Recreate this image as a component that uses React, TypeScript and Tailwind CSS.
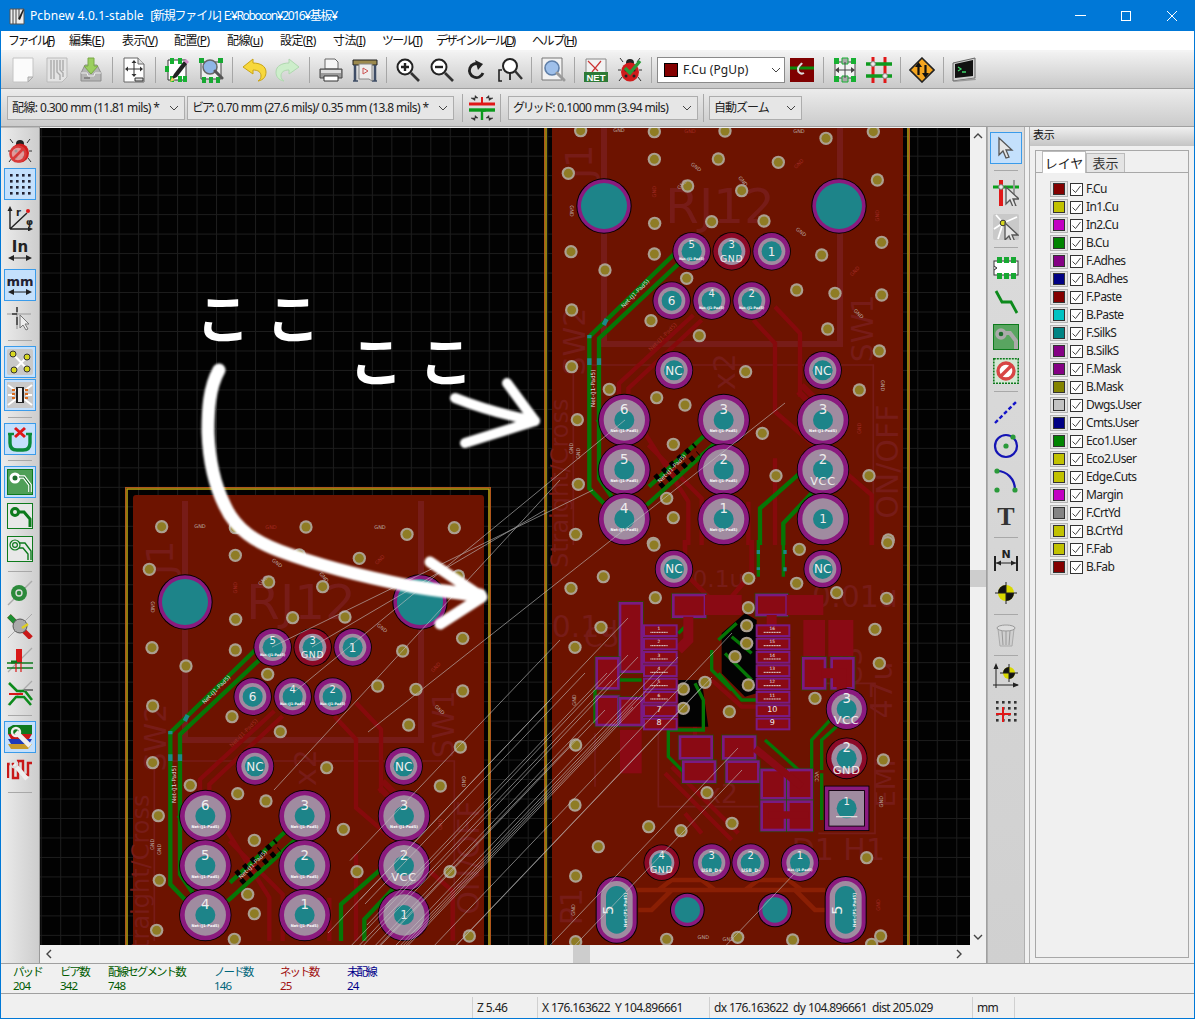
import React from 'react';

const I = ({ children, s = 26 }: { children: React.ReactNode; s?: number }) => (
  <svg width={s} height={s} viewBox="0 0 26 26" fill="none">{children}</svg>
);

/* ---------- top toolbar icons ---------- */
const IcNew = () => <I><path d="M3 1h20v19l-5 5H3z" fill="#fbfbfb" stroke="#c4c4c4" /><path d="M23 20h-5v5z" fill="#d8d8d8" stroke="#aaa" /></I>;
const IcBoard = () => <I><path d="M3 1h20v19l-5 5H3z" fill="#e4e4e4" stroke="#bbb" /><path d="M7 3v19M10 3v19M13 3v12l3 3v5M16 3v10l3 3v4M19 3v11" stroke="#aaa" strokeWidth="1.4" /></I>;
const IcSave = () => <I><path d="M3 16l4-8h12l4 8v8H3z" fill="#b5b5b5" stroke="#8e8e8e" /><path d="M3 16h6l1 3h6l1-3h6" stroke="#eee" /><path d="M6 21h6" stroke="#777" strokeWidth="1.5" /><path d="M10 1h6v8h4l-7 8-7-8h4z" fill="#9bcf5f" stroke="#7aa848" /></I>;
const IcPage = () => <I><path d="M3 1h14l6 6v18H3z" fill="#fff" stroke="#666" /><path d="M17 1v6h6" fill="#ddd" stroke="#666" /><path d="M13 4v15M5 12h16" stroke="#333" /><path d="M13 3l-2.5 3h5zM13 20l-2.5-3h5zM4 12l3-2.5v5zM22 12l-3-2.5v5z" fill="#333" /><path d="M14 21h8v3h-8z" fill="#ddd" stroke="#333" /></I>;
const IcNetEdit = () => <I><path d="M4 3h18v20H4z" fill="#fff" stroke="#333" /><path d="M6 1h4v6H6zM14 1h4v6h-4zM6 19h4v6H6zM14 19h4v6h-4zM1 9h4v6H1z" fill="#17b032" /><path d="M19 19h4v6h-4z" fill="#17b032" /><path d="M7 23l3-6L20 4l3 3-10 13z" fill="#222" /><path d="M20 4l2-2 3 3-2 2z" fill="#d58ac8" /><path d="M6 25l2-5 3 3z" fill="#f0d060" /></I>;
const IcModView = () => <I><path d="M3 5h20v17H3z" fill="#eee" stroke="#444" /><path d="M1 1h5v5H1zM20 1h5v5h-5zM4 20h4v6H4zM11 20h4v6h-4zM18 20h4v6h-4z" fill="#17a832" /><circle cx="12" cy="10" r="7" fill="#8fb6e6" stroke="#666" strokeWidth="1.5" /><path d="M17 14l7 7" stroke="#555" strokeWidth="3" strokeLinecap="round" /></I>;
const IcUndo = () => <I><path d="M12 2L2 10l10 7v-4c5 0 8 2 8 6 0 2-1 4-3 5 6-1 8-5 8-9 0-6-6-9-13-9z" fill="#f7d83c" stroke="#c9a315" /></I>;
const IcRedo = () => <I><path d="M14 2l10 8-10 7v-4c-5 0-8 2-8 6 0 2 1 4 3 5-6-1-8-5-8-9 0-6 6-9 13-9z" fill="#cdeecb" stroke="#b0d8b0" /></I>;
const IcPrint = () => <I><path d="M7 2h10l3 3v7H7z" fill="#f6f6f6" stroke="#666" /><path d="M2 12h22v9H2z" fill="#9a9a9a" stroke="#444" /><path d="M3 13h20v3H3z" fill="#ddd" /><path d="M6 19h14v5H6z" fill="#fff" stroke="#333" /></I>;
const IcPlot = () => <I><path d="M1 3h24v5H1z" fill="#9c8a4e" stroke="#222" /><path d="M3 8v16M23 8v16" stroke="#3f4d66" strokeWidth="2.5" /><path d="M1 24h5M20 24h5" stroke="#3f4d66" strokeWidth="1.5" /><path d="M7 7h13v17l-3-2H7z" fill="#eee" stroke="#888" /><path d="M11 11l5 3-5 3z" fill="none" stroke="#c55" /></I>;
const IcZoomIn = () => <I><circle cx="10" cy="10" r="7.5" fill="#fff" stroke="#222" strokeWidth="2" /><path d="M6 10h8M10 6v8" stroke="#222" strokeWidth="2.4" /><path d="M16 16l8 8" stroke="#333" strokeWidth="2.6" /></I>;
const IcZoomOut = () => <I><circle cx="10" cy="10" r="7.5" fill="#fff" stroke="#222" strokeWidth="2" /><path d="M6 10h8" stroke="#222" strokeWidth="2.4" /><path d="M16 16l8 8" stroke="#333" strokeWidth="2.6" /></I>;
const IcRedraw = () => <I><path d="M20 16a7 7 0 1 1-4-9" stroke="#222" strokeWidth="2.8" /><path d="M12 3l8 4-5 6z" fill="#222" /></I>;
const IcZoomFit = () => <I><circle cx="13" cy="9" r="7" fill="#fff" stroke="#222" strokeWidth="2" /><path d="M18 14l7 8" stroke="#333" strokeWidth="2.4" /><path d="M5 13H2v11h3" stroke="#222" strokeWidth="1.6" /><path d="M13 16v7" stroke="#222" strokeWidth="1.8" /></I>;
const IcFind = () => <I><path d="M2 1h20v22H2z" fill="#f2f2f2" stroke="#777" /><circle cx="12" cy="11" r="7" fill="#9fc0ea" stroke="#5f7fa8" strokeWidth="1.6" /><path d="M17 16l7 7" stroke="#9a9a9a" strokeWidth="3" strokeLinecap="round" /></I>;
const IcNet = () => <I><path d="M3 2h20v16H3z" fill="#f2f2f2" stroke="#888" /><path d="M5 4l10 10M18 4L9 15" stroke="#c33" strokeWidth="1.2" /><path d="M1 15h24v10H1z" fill="#2d7a36" /><text x="13" y="24" fontSize="9.500" fontWeight="700" fontFamily="'Liberation Sans',sans-serif" fill="#fff" textAnchor="middle">NET</text></I>;
const Bug = () => <><path d="M6 5L3 1M20 5l3-4M4 13H1M25 13h-3M5 20l-3 4M21 20l3 4" stroke="#333" /><circle cx="13" cy="6" r="4" fill="#222" /><ellipse cx="13" cy="15" rx="9" ry="9.5" fill="#d01c1c" /><circle cx="9" cy="13" r="1.5" fill="#222" /><circle cx="17" cy="13" r="1.5" fill="#222" /><circle cx="9" cy="19" r="1.5" fill="#222" /><circle cx="17" cy="19" r="1.5" fill="#222" /></>;
const IcDrc = () => <I><Bug /><path d="M8 11l5 5 10-12" stroke="#2b9a3a" strokeWidth="3.4" /></I>;
const IcLayer = () => <I><path d="M1 1h24v24H1z" fill="#7f0000" /><path d="M1 11h24" stroke="#0c8a0c" strokeWidth="3" /><path d="M15 16a4 4 0 0 1-6-4c0-3 3-4 4-6" stroke="#ddd" strokeWidth="2" /></I>;
const IcAuto = () => <I><path d="M3 5h20v16H3z" fill="#f4f4f4" stroke="#444" /><path d="M2 1h5v6H2zM19 1h5v6h-5zM2 19h5v6H2zM19 19h5v6h-5z" fill="#17b032" /><path d="M10 1h6v6h-6zM10 19h6v6h-6z" fill="#aaa" stroke="#17b032" /><path d="M4 13h18M13 5v16" stroke="#444" /><path d="M3 13l4-3v6zM23 13l-4-3v6z" fill="#444" /></I>;
const IcTrack = () => <I><path d="M7 0v26M19 0v26" stroke="#e01818" strokeWidth="3" /><path d="M0 7h26M0 19h26" stroke="#0f9a1f" strokeWidth="3.4" /><circle cx="7" cy="7" r="2.4" fill="#eee" stroke="#888" /><circle cx="19" cy="19" r="2.4" fill="#eee" stroke="#888" /></I>;
const IcSwap = () => <I><path d="M13 1l12 12-12 12L1 13z" fill="#f4a51f" stroke="#222" strokeWidth="1.6" /><path d="M9.5 18V8M16.5 8v10" stroke="#111" strokeWidth="2.2" /><path d="M9.5 5l-3.5 5h7zM16.5 21l-3.5-5h7z" fill="#111" /></I>;
const IcTerm = () => <I><path d="M1 6l22-5v20l-22 3z" fill="#d0d0d0" stroke="#666" /><path d="M3 7l18-4v16L3 21z" fill="#111" /><path d="M6 10l3 2-3 2M10 15h4" stroke="#3dd66b" strokeWidth="1.3" /><path d="M1 24l22-3 1 2-22 2z" fill="#999" /></I>;

/* ---------- left toolbar ---------- */
const IcDrcOff = () => <I><Bug /><circle cx="11" cy="16" r="7.5" stroke="#d83a3a" strokeWidth="2.6" fill="#eee" fillOpacity=".6" /><path d="M6 21l10-10" stroke="#d83a3a" strokeWidth="2.6" /></I>;
const IcGrid = () => <I>{[3, 9, 15, 21].flatMap(y => [3, 9, 15, 21].map(x => <rect key={x + '-' + y} x={x} y={y} width="2.6" height="2.6" fill="#223" />))}</I>;
const IcPolar = () => <I><path d="M3 24V4M3 24h21M3 24L20 8" stroke="#222" strokeWidth="1.4" /><path d="M3 1l-2.5 5h5zM26 24l-5-2.5v5z" fill="#222" /><circle cx="21" cy="6" r="2" fill="#e01818" /><text x="9" y="11" fontSize="10" fontWeight="700" fontFamily="'DejaVu Sans',sans-serif" fill="#222">r</text><text x="19" y="20" fontSize="9" fontFamily="'DejaVu Sans',sans-serif" fontWeight="700" fill="#222">φ</text></I>;
const IcIn = () => <I><text x="13" y="14" fontSize="15" fontWeight="700" fontFamily="'DejaVu Sans',sans-serif" fill="#222" textAnchor="middle">In</text><path d="M3 20h20" stroke="#222" /><path d="M1 20l6-3v6zM25 20l-6-3v6z" fill="#222" /></I>;
const IcMm = () => <I><text x="13" y="14" fontSize="13" fontWeight="700" fontFamily="'DejaVu Sans',sans-serif" fill="#223" textAnchor="middle">mm</text><path d="M3 20h20" stroke="#222" /><path d="M1 20l6-3v6zM25 20l-6-3v6z" fill="#222" /></I>;
const IcCursor = () => <I><path d="M10 2v22M0 9h24" stroke="#999" strokeWidth="1.2" /><path d="M10 2v5M10 12v8M5 9h5" stroke="#333" strokeWidth="1.4" /><path d="M13 10v13l3-3 3 5 2-1-3-5h4z" fill="#eee" stroke="#777" /></I>;
const IcRats = () => <I><rect width="26" height="26" rx="2" fill="#c9c9c9" /><path d="M6 5l14 15M20 8L8 20" stroke="#fff" strokeWidth="2" /><circle cx="6" cy="5" r="3" fill="#d8d820" stroke="#333" /><circle cx="20" cy="8" r="3" fill="#d8d820" stroke="#333" /><circle cx="7" cy="21" r="3" fill="#d8d820" stroke="#333" /><circle cx="20" cy="20" r="3" fill="#d8d820" stroke="#333" /></I>;
const IcModRats = () => <I><rect width="26" height="26" fill="#c9c9c9" /><path d="M1 3l8 6M25 3l-8 6M1 23l8-6M25 23l-8-6M1 13h6M25 13h-6" stroke="#fff" strokeWidth="2" /><rect x="9" y="5" width="8" height="16" fill="#222" /><path d="M11 6h4v14h-4z" fill="#eee" /><path d="M5 8h3M5 12h3M5 16h3M18 8h3M18 12h3M18 16h3" stroke="#d86a1c" strokeWidth="2" /></I>;
const IcXU = () => <I><path d="M3 9v8c0 5 3 7 7 7h6c4 0 7-2 7-7V9" stroke="#0a8a3a" strokeWidth="3.4" /><path d="M1 8h6M19 8h6" stroke="#0a8a3a" strokeWidth="2.4" /><path d="M8 2l10 9M18 2L8 11" stroke="#e01818" strokeWidth="3" /></I>;
const IcFillZone = () => <I><rect x=".5" y=".5" width="25" height="25" fill="#4f9f57" stroke="#0d7a1c" /><circle cx="8" cy="9" r="4" stroke="#fff" strokeWidth="3" fill="#1d6d2c" /><path d="M12 8h5l6 8v7" stroke="#fff" strokeWidth="3.6" /><path d="M12 8h5l6 8v7" stroke="#0b6a1c" strokeWidth="1.2" /></I>;
const IcZoneOut = () => <I><rect x=".5" y=".5" width="25" height="25" stroke="#0d7a1c" fill="#e8e8e8" /><circle cx="8" cy="9" r="3.5" stroke="#0d7a1c" strokeWidth="3" /><path d="M12 9h5l6 7v8" stroke="#0d7a1c" strokeWidth="3" /></I>;
const IcZoneSk = () => <I><rect x=".5" y=".5" width="25" height="25" stroke="#0d7a1c" fill="#e8e8e8" /><circle cx="8" cy="9" r="5" stroke="#0d7a1c" strokeWidth="1.2" /><circle cx="8" cy="9" r="2.4" stroke="#0d7a1c" strokeWidth="1.2" /><path d="M12 7h6l6 8v9M12 12h4l5 6v6" stroke="#0d7a1c" strokeWidth="1.4" /></I>;
const IcVia = () => <I><path d="M1 25L25 1" stroke="#aaa" strokeWidth="1.5" /><circle cx="12" cy="13" r="8" fill="#2c8a3b" /><circle cx="12" cy="13" r="3" stroke="#ddd" strokeWidth="1.4" /></I>;
const IcTrk = () => <I><path d="M2 3l22 22" stroke="#c81818" strokeWidth="5" /><path d="M2 3l9 9" stroke="#1d8f33" strokeWidth="5" /><circle cx="13" cy="13" r="7" fill="#aaa" stroke="#555" /><path d="M15 15l6-4" stroke="#e0d020" strokeWidth="2.4" /><path d="M1 25L25 1" stroke="#aaa" /></I>;
const IcPadIc = () => <I><path d="M1 25L25 1" stroke="#aaa" strokeWidth="1.2" /><path d="M9 2h6v14H9z" fill="#d81818" /><path d="M0 16h26M0 21h26" stroke="#0d7a1c" strokeWidth="1.6" /><path d="M4 15h6" stroke="#0d7a1c" strokeWidth="3" /><path d="M9 16v9M14 16v9" stroke="#d81818" strokeWidth="1.2" /></I>;
const IcTrkX = () => <I><path d="M1 25L25 1" stroke="#aaa" strokeWidth="1.2" /><path d="M2 3l8 8h8l7 9" stroke="#0d8a1c" strokeWidth="2.6" /><path d="M2 25l7-8h8l7 8" stroke="#0d8a1c" strokeWidth="2.6" /><path d="M2 14h14" stroke="#d81818" strokeWidth="2" /><path d="M17 10h9" stroke="#777" strokeWidth="2" /></I>;
const IcLayers = () => <I><path d="M1 4l5-3h19v9H1z" fill="#0e7a1e" /><path d="M1 10h24l-3 5H4z" fill="#c81818" /><path d="M1 15h24l-3 5H4z" fill="#1c3bb8" /><path d="M1 20h24l-4 5H4z" fill="#c69a2a" /><path d="M9 8l14 14" stroke="#eee" strokeWidth="4.6" /><circle cx="9" cy="8" r="4" stroke="#eee" strokeWidth="2.4" /></I>;
const IcMeander = () => <I><path d="M1 21V7h5v14h5V4h5v14h5V6h4" stroke="#c81818" strokeWidth="2.4" /><path d="M7 7l13 15" stroke="#eee" strokeWidth="4.6" /><circle cx="7" cy="7" r="3.4" stroke="#ddd" strokeWidth="2" /></I>;

/* ---------- right toolbar ---------- */
const Arrow = ({ x = 0, y = 0 }: { x?: number; y?: number }) => <path transform={`translate(${x} ${y})`} d="M0 0v17l4-4 3 7 3-1-3-7h6z" fill="#e6e6e6" stroke="#555" strokeWidth="1.3" />;
const IcSel = () => <I><Arrow x={6} y={3} /></I>;
const IcHigh = () => <I><path d="M0 7h26" stroke="#0ca01c" strokeWidth="3" /><path d="M8 0v26" stroke="#e01818" strokeWidth="4" /><path d="M21 0v24" stroke="#999" strokeWidth="2" /><circle cx="8" cy="7" r="2.4" fill="#eee" stroke="#777" /><Arrow x={13} y={7} /></I>;
const IcLocal = () => <I><rect width="26" height="26" rx="2" fill="#c9c9c9" /><path d="M10 9L3 1M10 9L24 3M10 9L1 15M10 9l-5 16" stroke="#fff" strokeWidth="1.8" /><circle cx="10" cy="9" r="2.8" fill="#d8d820" stroke="#333" /><Arrow x={12} y={9} /></I>;
const IcMod = () => <I><rect x="1" y="6" width="24" height="14" fill="#fff" stroke="#333" /><path d="M4 2h5v6H4zM11 2h5v6h-5zM18 2h5v6h-5zM4 18h5v6H4zM11 18h5v6h-5zM18 18h5v6h-5z" fill="#17a832" /><path d="M1 11l3 2-3 2" fill="#ccc" stroke="#333" /></I>;
const IcRoute = () => <I><path d="M3 2l6 11h9l6 11" stroke="#0d8a1c" strokeWidth="2.8" /></I>;
const IcKeep = () => <I><rect x=".5" y=".5" width="25" height="25" fill="#59a560" stroke="#0d7a1c" /><circle cx="8" cy="10" r="4" stroke="#aaa" strokeWidth="3.4" fill="#1d6d2c" /><path d="M12 9h5l6 8v8" stroke="#aaa" strokeWidth="4" /></I>;
const IcNo = () => <I><rect x=".8" y=".8" width="24.4" height="24.4" fill="#d4e8d4" stroke="#0d7a1c" strokeWidth="1.6" strokeDasharray="2 1" /><circle cx="13" cy="13" r="8" fill="#fff" stroke="#d84545" strokeWidth="3.4" /><path d="M8 18l10-10" stroke="#d84545" strokeWidth="3.4" /></I>;
const IcLine = () => <I><path d="M2 24L24 2" stroke="#1414c8" strokeWidth="2.4" strokeDasharray="4 2.4" /></I>;
const IcCircle = () => <I><circle cx="13" cy="13" r="11" stroke="#1414b4" strokeWidth="2.2" /><circle cx="13" cy="13" r="2.6" fill="#2a9a3a" /><circle cx="20" cy="4" r="2.6" fill="#2a9a3a" /></I>;
const IcArc = () => <I><path d="M4 3c10 0 18 8 18 19" stroke="#1414b4" strokeWidth="2.2" /><circle cx="4" cy="3" r="2.6" fill="#2a9a3a" /><circle cx="22" cy="22" r="2.6" fill="#2a9a3a" /><circle cx="4" cy="22" r="2.6" fill="#2a9a3a" /></I>;
const IcT = () => <I><text x="13" y="23" fontSize="26" fontWeight="700" fontFamily="'Liberation Serif',serif" fill="#333" textAnchor="middle">T</text></I>;
const IcDim = () => <I><path d="M2 10v15M24 10v15" stroke="#222" strokeWidth="2" /><path d="M3 17h20" stroke="#222" /><path d="M3 17l5-2.5v5zM23 17l-5-2.5v5z" fill="#222" /><text x="13" y="12" fontSize="11" fontWeight="700" fontFamily="'DejaVu Sans',sans-serif" fill="#222" textAnchor="middle">N</text></I>;
const Target = ({ x = 13, y = 13, r = 8 }: { x?: number; y?: number; r?: number }) => <><circle cx={x} cy={y} r={r} fill="#d8d800" /><path d={`M${x} ${y}V${y - r}A${r} ${r} 0 0 0 ${x - r} ${y}zM${x} ${y}V${y + r}A${r} ${r} 0 0 0 ${x + r} ${y}z`} fill="#111" /><path d={`M${x - r - 3} ${y}h${2 * r + 6}M${x} ${y - r - 3}v${2 * r + 6}`} stroke="#222" /></>;
const IcTarget = () => <I><Target /></I>;
const IcTrash = () => <I><path d="M5 7h16l-2 17H7z" fill="#cfcfcf" stroke="#aaa" /><path d="M9 9l1 14M13 9v14M17 9l-1 14" stroke="#999" /><ellipse cx="13" cy="6" rx="9" ry="3" fill="#ddd" stroke="#999" /><rect x="11" y="2" width="4" height="2" fill="#bbb" /></I>;
const IcOrigin = () => <I><path d="M3 25V2M0 22h25" stroke="#222" /><path d="M3 0L0.5 6h5zM26 22l-6-2.5v5z" fill="#222" /><Target x={16} y={10} r={6} /></I>;
const IcGridOrigin = () => <I>{[3, 9, 15, 21].flatMap(y => [3, 9, 15, 21].map(x => <rect key={x + '-' + y} x={x} y={y} width="2.6" height="2.6" fill="#333" />))}<path d="M3 16h15M10 9v15" stroke="#e01818" strokeWidth="2" /></I>;

const TopBtn = ({ c }: { c: React.ReactNode }) => <div className="w-[34px] h-full flex items-center justify-center shrink-0">{c}</div>;
const TopSep = () => <div className="w-[9px] h-full flex items-center justify-center shrink-0"><div className="w-px h-[26px] bg-[#a6a6a6]" /></div>;
const Chev = () => <svg width="10" height="6" viewBox="0 0 10 6" className="shrink-0"><path d="M1 1l4 4 4-4" stroke="#444" fill="none" /></svg>;
const Combo = ({ w, children }: { w: string; children: React.ReactNode }) => (
  <div className={`${w} h-[24px] shrink-0 border border-[#adadad] bg-[#e6e6e6] flex items-center justify-between pl-[4px] pr-[5px] text-[12px] tracking-[-0.6px] text-[#222] whitespace-nowrap overflow-hidden`}>
    <span>{children}</span>
    <Chev />
  </div>
);
const Kana = ({ children }: { children: React.ReactNode }) => <span className="tracking-[-2.2px]">{children}</span>;

const Tool = ({ c, on, h }: { c: React.ReactNode; on?: boolean; h: string }) => (
  <div className={`${h} w-full flex items-center justify-center shrink-0`}>
    <div className={on ? 'w-[32px] h-[32px] flex items-center justify-center bg-[#c4e0fc] border border-[#3a9bea]' : 'w-[32px] h-[32px] flex items-center justify-center'}>{c}</div>
  </div>
);
const Sep = ({ h }: { h: string }) => <div className={`${h} w-full flex items-center justify-center shrink-0`}><div className="w-[24px] h-px bg-[#a8a8a8]" /></div>;

const MENU = [
  ['ファイル(', 'F', ')', 'w-[61px] tracking-[-2.4px]'], ['編集(', 'E', ')', 'w-[53px] tracking-[-0.6px]'], ['表示(', 'V', ')', 'w-[52px] tracking-[-0.6px]'], ['配置(', 'P', ')', 'w-[53px] tracking-[-0.6px]'], ['配線(', 'u', ')', 'w-[53px] tracking-[-0.6px]'],
  ['設定(', 'R', ')', 'w-[53px] tracking-[-0.6px]'], ['寸法(', 'I', ')', 'w-[49px] tracking-[-0.6px]'], ['ツール(', 'T', ')', 'w-[54px] tracking-[-1.8px]'], ['デザインルール(', 'D', ')', 'w-[96px] tracking-[-2.2px]'], ['ヘルプ(', 'H', ')', 'w-[60px] tracking-[-1.4px]'],
];
const LAYERS: [string, string][] = [
  ['F.Cu', '#840000'], ['In1.Cu', '#c2c200'], ['In2.Cu', '#c200c2'], ['B.Cu', '#008400'], ['F.Adhes', '#840084'], ['B.Adhes', '#000084'], ['F.Paste', '#840000'], ['B.Paste', '#00c2c2'], ['F.SilkS', '#008484'], ['B.SilkS', '#840084'], ['F.Mask', '#840084'],
  ['B.Mask', '#848400'], ['Dwgs.User', '#c2c2c2'], ['Cmts.User', '#000084'], ['Eco1.User', '#008400'], ['Eco2.User', '#c2c200'], ['Edge.Cuts', '#c2c200'], ['Margin', '#c200c2'], ['F.CrtYd', '#848484'], ['B.CrtYd', '#c2c200'], ['F.Fab', '#c2c200'], ['B.Fab', '#840000'],
];

/* ---------- PCB drawing ---------- */
const SILK = '#771c18';
const FONT = "'DejaVu Sans',sans-serif";
const TEAL = '#1d8489';
const PURPLE = '#8a1a7e';
const LILAC = '#a08ba0';
const Via = ({ x, y }: { x: number; y: number }) => <g><circle cx={x} cy={y} r={20} fill="#ab9f90" /><circle cx={x} cy={y} r={13.5} fill="#8f7c24" /></g>;
const Pad = ({ x, y, r, n, sub, big, red, mid }: { x: number; y: number; r: number; n?: string; sub?: boolean; big?: boolean; red?: boolean; mid?: string }) => {
  const tiny = !!mid && mid.length > 3;
  return (
    <g>
      <circle cx={x} cy={y} r={r + 2.5} fill="#000" />
      <circle cx={x} cy={y} r={r} fill={red ? '#8c0a28' : PURPLE} />
      <circle cx={x} cy={y} r={r - 14} fill={LILAC} />
      <circle cx={x} cy={y} r={30} fill={TEAL} />
      {n && !mid && !sub && <text x={x} y={y + 13} fontSize={36} fill="#eee" fontFamily={FONT} textAnchor="middle">{n}</text>}
      {n && (mid || sub) && <text x={x} y={y - (big ? 18 : 10)} fontSize={big ? 40 : 30} fill="#eee" fontFamily={FONT} textAnchor="middle">{n}</text>}
      {mid && <text x={x} y={y + (tiny ? 28 : big ? 46 : 32)} fontSize={tiny ? 14 : big ? 34 : 28} fontWeight={tiny ? 700 : 400} fill="#eee" fontFamily={FONT} textAnchor="middle" letterSpacing={tiny ? 0 : 2}>{mid}</text>}
      {sub && <text x={x} y={y + (big ? 36 : 26)} fontSize={big ? 11 : 10} fontWeight={700} fill="#fff" fontFamily={FONT} textAnchor="middle">Net-(J1-Pad5)</text>}
    </g>
  );
};
const Big = ({ x, y }: { x: number; y: number }) => <g><circle cx={x} cy={y} r={83} fill="#000" /><circle cx={x} cy={y} r={80} fill={PURPLE} /><circle cx={x} cy={y} r={69} fill={TEAL} /></g>;
const Silk = ({ x, y, t, s, r = 0 }: { x: number; y: number; t: string; s: number; r?: number }) => <text transform={`translate(${x} ${y}) rotate(${r})`} fontSize={s} fill={SILK} fontFamily={FONT} textAnchor="middle">{t}</text>;
const Gnd = ({ x, y, r = 0, c = '#b8a8a0', t = 'GND' }: { x: number; y: number; r?: number; c?: string; t?: string }) => <text transform={`translate(${x} ${y}) rotate(${r})`} fontSize={15} fill={c} fontFamily={FONT} textAnchor="middle">{t}</text>;

const V1 = [[107, 17], [328, 20], [540, 18], [985, 20], [843, 40], [70, 145], [328, 103], [520, 102], [700, 112], [997, 165], [428, 183], [590, 197], [329, 295], [500, 290], [657, 288], [1010, 352], [78, 380], [328, 387], [830, 390], [180, 435], [425, 460], [755, 495], [870, 505], [1010, 510], [80, 555], [318, 587], [463, 632], [848, 612], [1003, 678], [80, 725], [602, 740], [943, 795], [193, 793], [335, 818], [420, 840], [97, 884], [652, 925], [385, 958], [100, 1078], [693, 1052], [972, 1052], [365, 1120], [385, 1178], [92, 1228], [1030, 1245], [325, 1255]];
const V2 = [[327, 15], [763, 28], [1028, 8], [175, 110], [78, 145], [611, 115], [755, 130], [875, 158], [1025, 175], [331, 173], [610, 203], [168, 262], [605, 257], [605, 310], [570, 350], [990, 268], [90, 322], [1003, 370], [415, 447], [610, 435], [480, 427], [415, 505], [810, 475], [553, 515], [92, 615], [1015, 660], [90, 795], [486, 758], [311, 860], [408, 872], [561, 850], [160, 920], [965, 953], [92, 1008], [92, 1205], [365, 1198], [578, 1192], [743, 1200], [1007, 1188], [980, 1213]];

const Rs = ({ x, y, w, h, p = true }: { x: number; y: number; w: number; h: number; p?: boolean }) => (
  <g>
    {p && <rect x={x} y={y} width={w} height={h} fill="none" stroke="#0a6a0a" strokeWidth={13} opacity={0.55} />}
    <rect x={x} y={y} width={w} height={h} fill="#8a0a14" stroke={p ? '#7a1a82' : 'none'} strokeWidth={8} />
  </g>
);

const Board = ({ lower = true }: { lower?: boolean }) => (
  <g>
    <rect x={546} y={93} width={362} height={900} fill="none" stroke="#b39a12" strokeWidth={1.6} />
    <rect x={544.500} y={91.500} width={365} height={903} fill="none" stroke="#b0561c" strokeWidth={1} />
    <rect x={552} y={99} width={351} height={860} rx={3} fill="#6d1300" />
    {/* upper half: 3x coordinates */}
    <g transform="translate(545 125) scale(0.33333)">
      <g stroke={SILK} fill="none">
        <path d="M177-60V657H885V-60" strokeWidth={18} />
        <path d="M130 720H985V1260M85 720V1260" strokeWidth={5} />
      </g>
      <Silk x={525} y={295} t="RJ12" s={145} />
      <Silk x={140} y={110} t="J1" s={110} r={-90} />
      <Silk x={120} y={650} t="SW2" s={90} r={-90} />
      <Silk x={985} y={610} t="SW1" s={90} r={-90} />
      <Silk x={570} y={740} t="x2" s={90} r={-90} />
      <Silk x={68} y={1075} t="Straight/Cross" s={72} r={-90} />
      <Silk x={1060} y={1010} t="ON/OFF" s={90} r={-90} />
      <g fill="none" stroke="#860a0c" strokeWidth={13}>
        <path d="M690 545L765 625V815" />
        <path d="M625 585L690 655V860L980 1110V1260" />
        <path d="M445 570L222 775V825" />
        <path d="M470 585L250 790V830" />
        <path d="M300 925L430 1130V1260" />
        <path d="M310 960L470 1120V1260" />
        <path d="M690 1000V1260M610 1130V1260" />
        <path d="M770 780L840 850M760 800L830 870" strokeWidth={18} />
      </g>
      {V1.map(([x, y]) => <Via key={x + '-' + y} x={x} y={y} />)}
      <g fill="none" stroke="#067606" strokeWidth={13}>
        <path d="M395 380L133 635V1090L205 1165" />
        <path d="M405 412L162 640V1060L200 1115" />
        <path d="M160 880L240 970V1030L200 1060" strokeWidth={22} />
        <path d="M480 930L312 1085" />
        <path d="M510 955L305 1140" />
        <path d="M770 1040L645 1150V1260" />
        <path d="M800 1105L715 1195V1260" />
      </g>
      <path d="M133 720v-90M162 720v-70M176 600l15-30" stroke="#1b8a88" strokeWidth={13} strokeDasharray="20 60" fill="none" />
      <path d="M330 1060L450 960M345 1085L460 985" stroke="#000" strokeWidth={16} strokeDasharray="14 16" fill="none" />
      <text transform="translate(275 510) rotate(-45)" fontSize={17} fill="#ddd" fontFamily={FONT} textAnchor="middle">Net-(J1-Pad5)</text>
      <text transform="translate(150 790) rotate(-90)" fontSize={17} fill="#ddd" fontFamily={FONT} textAnchor="middle">Net-(J1-Pad5)</text>
      <text transform="translate(385 1035) rotate(-45)" fontSize={17} fill="#ddd" fontFamily={FONT} textAnchor="middle">Net-(J1-Pad5)</text>
      <text transform="translate(357 640) rotate(-45)" fontSize={17} fill="#a02a24" fontFamily={FONT} textAnchor="middle">Net-(J1-Pad5)</text>
      <Gnd x={222} y={22} /><Gnd x={435} y={25} c="#a02a24" /><Gnd x={762} y={25} />
      <Gnd x={450} y={130} r={40} /><Gnd x={765} y={120} r={-45} c="#a02a24" /><Gnd x={590} y={172} r={50} /><Gnd x={415} y={182} r={-45} />
      <Gnd x={332} y={200} r={-90} c="#a02a24" /><Gnd x={75} y={258} r={90} /><Gnd x={1002} y={272} r={-90} c="#a02a24" />
      <Gnd x={765} y={325} r={40} /><Gnd x={933} y={442} r={-45} c="#a02a24" /><Gnd x={937} y={570} r={45} />
      <Gnd x={1008} y={782} r={90} /><Gnd x={948} y={910} r={-90} c="#a02a24" /><Gnd x={85} y={970} r={-90} /><Gnd x={105} y={985} r={-90} />
      <Big x={177} y={243} /><Big x={882} y={243} />
      <Pad x={440} y={379} r={55} n="5" sub /><Pad x={560} y={379} r={55} n="3" mid="GND" red /><Pad x={680} y={379} r={55} n="1" />
      <Pad x={380} y={527} r={55} n="6" /><Pad x={500} y={527} r={55} n="4" sub /><Pad x={620} y={527} r={55} n="2" sub />
      <Pad x={387} y={736} r={55} n="NC" /><Pad x={833} y={736} r={55} n="NC" />
      <Pad x={238} y={885} r={76} n="6" sub big /><Pad x={536} y={885} r={76} n="3" sub big /><Pad x={834} y={885} r={76} n="3" sub big />
      <Pad x={238} y={1034} r={76} n="5" sub big /><Pad x={536} y={1034} r={76} n="2" sub big /><Pad x={834} y={1034} r={76} n="2" mid="VCC" big />
      <Pad x={238} y={1182} r={76} n="4" sub big /><Pad x={536} y={1182} r={76} n="1" sub big /><Pad x={834} y={1182} r={76} n="1" />
    </g>
    {/* lower half: 3x coordinates */}
    {lower && <g transform="translate(545 540) scale(0.33333)">
      <Silk x={120} y={290} t="0.1u" s={90} />
      <Silk x={170} y={320} t="C5" s={80} />
      <Silk x={520} y={140} t="0.1u" s={70} />
      <Silk x={930} y={200} t="0.01u" s={90} />
      <Silk x={950} y={380} t="C3" s={90} r={-90} />
      <Silk x={1040} y={450} t="47u" s={90} r={-90} />
      <Silk x={880} y={960} t="D1 H1" s={90} />
      <Silk x={530} y={790} t="x2" s={80} />
      <Silk x={1050} y={730} t="EMI" s={80} r={-90} />
      <Silk x={110} y={1100} t="P1" s={90} r={-90} />
      <path d="M340 560V800H640M150 580V740M820 430H990V880H820" stroke={SILK} strokeWidth={5} fill="none" />
      <path d="M420 0V100L490 170M620 0V100L560 170" stroke="#860a0c" strokeWidth={14} fill="none" />
      <path d="M400 490L450 440V610M500 420L590 500H650M360 700L560 900M380 680L580 880M420 820L470 880" stroke="#860a0c" strokeWidth={13} fill="none" />
      <path d="M270 1050H840M280 1110H320L380 1050M870 1110H810L750 1050M340 1050l40-30h90l40 30M600 1050l40-30h90l40 30" stroke="#8a1f04" strokeWidth={14} fill="none" />
      <path d="M400 420H470L490 560H400zM600 220L635 240V460L600 470L530 400V280z" fill="#030303" />
      <g fill="none" stroke="#067606" strokeWidth={10}>
        <path d="M640 0V110M715 0V110" />
        <path d="M400 280L440 240M520 300L575 250M500 330V390L560 450M540 340L620 420M560 290L620 340" />
        <path d="M520 400L590 480H635" />
        <path d="M450 430L475 480V570H370V650L420 700" />
        <path d="M660 600L800 725M800 720V600L860 535M830 690V600L880 555" />
        <path d="M830 700V840M150 450V550M225 420H290" />
      </g>
      <path d="M720 30v80M640 30v60" stroke="#1b8a88" strokeWidth={10} strokeDasharray="12 40" fill="none" />
      {V2.map(([x, y]) => <Via key={x + '-' + y} x={x} y={y} />)}
      <Rs x={385} y={165} w={95} h={65} /><Rs x={635} y={165} w={90} h={60} />
      <Rs x={480} y={165} w={110} h={60} p={false} /><Rs x={725} y={165} w={110} h={60} p={false} />
      <path d="M430 230V300L400 330" stroke="#8a0a14" strokeWidth={30} fill="none" /><path d="M680 225V260" stroke="#8a0a14" strokeWidth={30} />
      <Rs x={225} y={190} w={65} h={205} /><Rs x={155} y={355} w={65} h={90} /><Rs x={155} y={470} w={65} h={85} /><Rs x={225} y={475} w={65} h={80} />
      <Rs x={225} y={570} w={65} h={130} p={false} />
      <Rs x={775} y={240} w={65} h={110} p={false} /><Rs x={850} y={240} w={75} h={110} p={false} />
      <Rs x={775} y={355} w={65} h={90} /><Rs x={860} y={355} w={65} h={90} /><path d="M830 400h60v50" stroke="#8a0a14" strokeWidth={30} fill="none" />
      <Rs x={405} y={590} w={95} h={65} /><Rs x={535} y={590} w={95} h={65} /><Rs x={415} y={665} w={95} h={60} /><Rs x={545} y={665} w={95} h={60} />
      <Rs x={650} y={690} w={70} h={85} /><Rs x={730} y={690} w={70} h={85} /><Rs x={650} y={785} w={70} h={85} /><Rs x={730} y={785} w={70} h={85} />
      <path d="M670 825H790M630 625L770 740" stroke="#8a0a14" strokeWidth={22} fill="none" />
      {[0, 1, 2, 3, 4, 5, 6, 7].map(i => <g key={i}>
        <rect x={297} y={256 + 40 * i} width={98} height={32} fill="#8a0a14" stroke="#7a1a82" strokeWidth={6} />
        <rect x={635} y={256 + 40 * i} width={98} height={32} fill="#8a0a14" stroke="#7a1a82" strokeWidth={6} />
        <text x={342} y={i > 5 ? 276 + 40 * i : 270 + 40 * i} fontSize={i > 5 ? 24 : 13} fill="#eee" fontFamily={FONT} textAnchor="middle">{i + 1}</text>
        <text x={682} y={i > 5 ? 276 + 40 * i : 270 + 40 * i} fontSize={i > 5 ? 24 : 13} fill="#eee" fontFamily={FONT} textAnchor="middle">{16 - i}</text>
        {i < 6 && <path d={`M316 ${277 + 40 * i}h52M656 ${277 + 40 * i}h52`} stroke="#ddd" strokeWidth={3} strokeDasharray="4 1" />}
      </g>)}
      <Pad x={387} y={87} r={55} n="NC" /><Pad x={833} y={87} r={55} n="NC" />
      <Pad x={905} y={507} r={60} n="3" mid="VCC" big />
      <Pad x={905} y={655} r={60} n="2" mid="GND" big red />
      <rect x={845} y={745} width={120} height={120} fill={LILAC} stroke="#000" strokeWidth={16} />
      <rect x={845} y={745} width={120} height={120} fill="none" stroke={PURPLE} strokeWidth={11} />
      <circle cx={905} cy={805} r={30} fill={TEAL} />
      <text x={905} y={795} fontSize={30} fill="#eee" fontFamily={FONT} textAnchor="middle">1</text>
      <path d="M873 830h64" stroke="#ddd" strokeWidth={4} />
      <Pad x={350} y={968} r={52} n="4" mid="GND" red /><Pad x={500} y={968} r={55} n="3" mid="USB_D+" /><Pad x={617} y={968} r={55} n="2" mid="USB_D-" /><Pad x={765} y={968} r={55} n="1" sub />
      {[215, 902].map(x => <g key={x}>
        <rect x={x - 63} y={1008} width={126} height={203} rx={63} fill="#000" />
        <rect x={x - 60} y={1011} width={120} height={197} rx={60} fill={PURPLE} />
        <rect x={x - 48} y={1023} width={96} height={173} rx={48} fill={LILAC} />
        <rect x={x - 32} y={1038} width={64} height={143} rx={32} fill={TEAL} />
        <text transform={`translate(${x - 10} 1110) rotate(-90)`} fontSize={44} fill="#eee" fontFamily={FONT} textAnchor="middle">5</text>
        <text transform={`translate(${x + 30} 1110) rotate(-90)`} fontSize={13} fontWeight={700} fill="#eee" fontFamily={FONT} textAnchor="middle">Net-(P1-Pad5)</text>
      </g>)}
      {[427, 690].map(x => <g key={x}><circle cx={x} cy={1110} r={52} fill="#000" /><circle cx={x} cy={1110} r={49} fill={PURPLE} /><circle cx={x} cy={1110} r={38} fill={TEAL} /></g>)}
      <Gnd x={92} y={480} r={-90} /><Gnd x={90} y={1110} r={-90} /><Gnd x={1015} y={785} r={-90} /><Gnd x={1005} y={1095} r={-90} c="#a02a24" /><Gnd x={475} y={1198} /><Gnd x={550} y={1203} /><Gnd x={810} y={710} r={90} t="VCC" />
    </g>}
  </g>
);

const RATS_END = [[628, 618], [628, 655], [607, 673], [638, 657], [658, 670], [658, 683], [633, 707], [605, 710], [585, 673], [678, 657], [732, 633], [712, 677], [702, 687], [738, 748], [742, 770], [637, 697], [560, 640], [550, 700], [575, 740], [795, 873], [612, 680], [590, 720]];
const RATS_T = [300, 310, 240, 290, 320, 300, 340, 260, 220, 330, 400, 360, 350, 300, 330, 320, 210, 190, 210, 270, 270, 230];

const Canvas = () => (
  <svg viewBox="40 128 930 817" className="w-[930px] h-[817px] block bg-[#020202]">
    <defs>
      <pattern id="g" x="40.700" y="136.200" width="19.480" height="19.480" patternUnits="userSpaceOnUse">
        <path d="M.5 0V19.480M0 .5H19.480" stroke="#1d1d1d" strokeWidth="1" />
      </pattern>
      <filter id="soft" x="-10%" y="-10%" width="120%" height="120%"><feGaussianBlur stdDeviation="0.9" /></filter>
    </defs>
    <rect x={40} y={128} width={930} height={817} fill="url(#g)" />
    <Board />
    <g transform="translate(-419 396)"><Board lower={false} /></g>
    <g stroke="#c4c4c4" strokeWidth={0.8} opacity={0.75}>
      <line x1={272} y1={647} x2={593} y2={490} />
      <line x1={293} y1={693} x2={625} y2={420} />
      <line x1={312} y1={647} x2={545} y2={510} />
      <line x1={368} y1={732} x2={785} y2={403} />
      <line x1={274} y1={790} x2={560} y2={480} />
      {RATS_END.map(([x, y], i) => <line key={i} x1={x} y1={y} x2={x - RATS_T[i]} y2={y + RATS_T[i] * 1.05} />)}
    </g>
    <g stroke="#fff" strokeLinecap="round" strokeLinejoin="round" fill="none" filter="url(#soft)">
      <path d="M219 370C209 388 208 410 208 432C209 462 215 486 225 506C236 530 256 542 280 551C320 566 370 578 410 586C435 590 455 593 480 595" strokeWidth={13} />
      <path d="M430 562L482 597L440 624" strokeWidth={11} />
      <path d="M455 398C480 408 510 416 535 421L465 443" strokeWidth={10} />
      <path d="M507 383L535 421" strokeWidth={10} />
    </g>
    <g fill="#fff" fontFamily="'Noto Sans CJK JP',sans-serif" fontWeight={700} fontSize={54}>
      <text x={196} y={339} letterSpacing={16}>ここ</text>
      <text x={349} y={382} letterSpacing={16}>ここ</text>
    </g>
  </svg>
);

const ScrollArrow = ({ d }: { d: string }) => <svg width="10" height="10" viewBox="0 0 10 10"><path d={d} stroke="#444" strokeWidth="1.4" fill="none" /></svg>;

export default function App() {
  return (
    <div className="w-[1195px] h-[1019px] flex flex-col overflow-hidden bg-[#f0f0f0] border-x border-b border-[#0078d7] font-['Noto_Sans','Noto_Sans_CJK_JP',sans-serif] text-[12px] text-[#111]">
      {/* title bar */}
      <div className="h-[31px] -mx-px shrink-0 bg-[#0078d7] text-white flex items-center pl-[9px]">
        <svg width="16" height="18" viewBox="0 0 16 18" className="shrink-0"><path d="M1 2h14v15H1z" fill="#eee" stroke="#555" /><path d="M4 2v15M7 2v15M10 2v9" stroke="#444" /><path d="M9 12l5-10 1 1-4 10z" fill="#222" /></svg>
        <span className="ml-[5px] text-[12px] whitespace-pre tracking-[0.1px]">Pcbnew 4.0.1-stable  <span className="tracking-[-1.2px]">[新規ファイル]</span> <span className="tracking-[-1.35px]">E:¥Robocon¥2016¥基板¥</span></span>
        <div className="ml-auto flex h-full">
          <div className="w-[46px] flex items-center justify-center"><div className="w-[11px] h-px bg-white" /></div>
          <div className="w-[46px] flex items-center justify-center"><div className="w-[10px] h-[10px] border border-white" /></div>
          <div className="w-[46px] flex items-center justify-center"><svg width="12" height="12" viewBox="0 0 12 12"><path d="M1 1l10 10M11 1L1 11" stroke="#fff" /></svg></div>
        </div>
      </div>
      {/* menu */}
      <div className="h-[19px] shrink-0 bg-white flex items-center pl-[7px] text-[12px] text-[#111]">
        {MENU.map(m => <div key={m[0]} className={`${m[3]} shrink-0 whitespace-nowrap`}>{m[0]}<span className="underline">{m[1]}</span>{m[2]}</div>)}
      </div>
      <div className="h-[2px] shrink-0 bg-[#f4f4f4]" />
      {/* toolbar 1 */}
      <div className="h-[37px] shrink-0 flex items-center pl-[5px] bg-gradient-to-b from-[#f2f2f2] to-[#c9c9c9] border-b border-[#9f9f9f]">
        {[<IcNew />, <IcBoard />, <IcSave />].map((c, i) => <TopBtn key={i} c={c} />)}
        <TopSep /><TopBtn c={<IcPage />} /><TopSep />
        <TopBtn c={<IcNetEdit />} /><TopBtn c={<IcModView />} /><TopSep />
        <TopBtn c={<IcUndo />} /><TopBtn c={<IcRedo />} /><TopSep />
        <TopBtn c={<IcPrint />} /><TopBtn c={<IcPlot />} /><TopSep />
        <TopBtn c={<IcZoomIn />} /><TopBtn c={<IcZoomOut />} /><TopBtn c={<IcRedraw />} /><TopBtn c={<IcZoomFit />} /><TopSep />
        <TopBtn c={<IcFind />} /><TopSep />
        <TopBtn c={<IcNet />} /><TopBtn c={<IcDrc />} /><TopSep />
        <div className="w-[128px] h-[26px] shrink-0 ml-px bg-white border border-[#8a8a8a] flex items-center pl-[6px] pr-[3px]">
          <div className="w-[14px] h-[14px] bg-[#840000] border border-black shrink-0" />
          <span className="ml-[5px] text-[12px] tracking-[0.1px] text-[#222] grow">F.Cu (PgUp)</span>
          <Chev />
        </div>
        <TopBtn c={<IcLayer />} /><TopSep />
        <TopBtn c={<IcAuto />} /><TopBtn c={<IcTrack />} /><TopSep />
        <TopBtn c={<IcSwap />} /><TopSep />
        <TopBtn c={<IcTerm />} />
      </div>
      {/* toolbar 2 */}
      <div className="h-[37px] shrink-0 flex items-center pl-[6px] bg-gradient-to-b from-[#ececec] to-[#cbcbcb]">
        <Combo w="w-[178px]">配線: 0.300 mm (11.81 mils) *</Combo>
        <div className="w-[2px] shrink-0" />
        <Combo w="w-[267px]"><Kana>ビア</Kana>: 0.70 mm (27.6 mils)/ 0.35 mm (13.8 mils) *</Combo>
        <div className="w-[9px] h-[28px] shrink-0 border-r border-[#a8a8a8]" />
        <div className="w-[37px] h-full shrink-0 flex items-center justify-center">
          <svg width="26" height="28" viewBox="0 0 26 28"><path d="M2 4h7l-3-2.500v5zM24 4h-7l3-2.500v5zM2 24h7l-3-2.500v5zM24 24h-7l3-2.500v5z" stroke="#333" fill="#333" strokeWidth=".5" /><path d="M0 10h26" stroke="#e01818" strokeWidth="3" /><path d="M0 16h26" stroke="#0a9a1c" strokeWidth="3.400" /><path d="M13 3v7l-4 0" stroke="#e01818" strokeWidth="2" fill="none" /><path d="M13 26v-9l4-1" stroke="#0a9a1c" strokeWidth="2.400" fill="none" /></svg>
        </div>
        <div className="w-[8px] h-[28px] shrink-0 border-l border-[#a8a8a8]" />
        <Combo w="w-[190px]"><Kana>グリッド</Kana>: 0.1000 mm (3.94 mils)</Combo>
        <div className="w-[11px] h-[28px] shrink-0 flex justify-center"><div className="w-px h-full bg-[#a8a8a8]" /></div>
        <Combo w="w-[93px]"><span className="tracking-[-1px]">自動ズーム</span></Combo>
      </div>
      <div className="h-px shrink-0 bg-[#a0a0a0]" />
      {/* main */}
      <div className="h-[836px] shrink-0 flex bg-[#f0f0f0]">
        <div className="w-[38px] shrink-0 flex flex-col pt-[6px] bg-gradient-to-r from-[#ececec] to-[#cdcdcd] border-t border-[#bbb]">
          <Tool h="h-[33.500px]" c={<IcDrcOff />} />
          <Tool h="h-[33.500px]" on c={<IcGrid />} />
          <Tool h="h-[33.500px]" c={<IcPolar />} />
          <Tool h="h-[33.500px]" c={<IcIn />} />
          <Tool h="h-[33.500px]" on c={<IcMm />} />
          <Tool h="h-[33.500px]" c={<IcCursor />} />
          <Sep h="h-[10px]" />
          <Tool h="h-[33.500px]" on c={<IcRats />} />
          <Tool h="h-[33.500px]" on c={<IcModRats />} />
          <Sep h="h-[10px]" />
          <Tool h="h-[33.500px]" on c={<IcXU />} />
          <Sep h="h-[10px]" />
          <Tool h="h-[33.500px]" on c={<IcFillZone />} />
          <Tool h="h-[33.500px]" c={<IcZoneOut />} />
          <Tool h="h-[33.500px]" c={<IcZoneSk />} />
          <Sep h="h-[10px]" />
          <Tool h="h-[33.500px]" c={<IcVia />} />
          <Tool h="h-[33.500px]" c={<IcTrk />} />
          <Tool h="h-[33.500px]" c={<IcPadIc />} />
          <Tool h="h-[33.500px]" c={<IcTrkX />} />
          <Sep h="h-[10px]" />
          <Tool h="h-[33.500px]" on c={<IcLayers />} />
          <Tool h="h-[33.500px]" c={<IcMeander />} />
          <Sep h="h-[10px]" />
        </div>
        <div className="w-px shrink-0 bg-[#9a9a9a]" />
        <div className="w-[946px] shrink-0 flex flex-col pt-px bg-[#f0f0f0]">
          <div className="flex h-[817px] shrink-0">
            <Canvas />
            <div className="w-[16px] h-full flex flex-col items-center justify-between py-[3px] relative">
              <ScrollArrow d="M1 7l4-4 4 4" />
              <div className="absolute top-[442px] left-0 w-[16px] h-[17px] bg-[#cdcdcd]" />
              <ScrollArrow d="M1 3l4 4 4-4" />
            </div>
          </div>
          <div className="h-[18px] shrink-0 flex items-center justify-between pl-[4px] pr-[22px] relative">
            <ScrollArrow d="M7 1L3 5l4 4" />
            <div className="absolute left-[533px] top-0 w-[17px] h-[18px] bg-[#cdcdcd]" />
            <ScrollArrow d="M3 1l4 4-4 4" />
          </div>
        </div>
        <div className="w-px shrink-0 bg-[#a0a0a0]" />
        <div className="w-[38px] shrink-0 flex flex-col pt-[4px] bg-gradient-to-b from-[#dcdcdc] to-[#d0d0d0] border-x border-[#b0b0b0]">
          <Tool h="h-[34.500px]" on c={<IcSel />} />
          <Sep h="h-[10px]" />
          <Tool h="h-[34.500px]" c={<IcHigh />} />
          <Tool h="h-[34.500px]" c={<IcLocal />} />
          <Sep h="h-[6px]" />
          <Tool h="h-[34.500px]" c={<IcMod />} />
          <Tool h="h-[34.500px]" c={<IcRoute />} />
          <Tool h="h-[34.500px]" c={<IcKeep />} />
          <Tool h="h-[34.500px]" c={<IcNo />} />
          <Sep h="h-[6px]" />
          <Tool h="h-[34.500px]" c={<IcLine />} />
          <Tool h="h-[34.500px]" c={<IcCircle />} />
          <Tool h="h-[34.500px]" c={<IcArc />} />
          <Tool h="h-[34.500px]" c={<IcT />} />
          <Sep h="h-[9px]" />
          <Tool h="h-[34.500px]" c={<IcDim />} />
          <Tool h="h-[34.500px]" c={<IcTarget />} />
          <Sep h="h-[7px]" />
          <Tool h="h-[34.500px]" c={<IcTrash />} />
          <Sep h="h-[7px]" />
          <Tool h="h-[34.500px]" c={<IcOrigin />} />
          <Tool h="h-[34.500px]" c={<IcGridOrigin />} />
        </div>
        <div className="w-[5px] shrink-0 border-r border-[#b0b0b0]" />
        {/* layer panel */}
        <div className="flex-1 flex flex-col min-w-0">
          <div className="h-[19px] shrink-0 bg-gradient-to-b from-[#f0f0f0] to-[#c4c4c4] pl-[3px] text-[11px] leading-[16px] tracking-[-0.2px]">表示</div>
          <div className="mt-[4px] ml-[5px] w-[154px] h-[808px] border border-[#a8a8a8] flex flex-col">
            <div className="h-[22px] shrink-0 flex items-end pl-[6px] border-b border-[#a8a8a8]">
              <div className="w-[44px] h-[22px] -mb-px bg-white border border-b-0 border-[#bbb] text-center leading-[22px] text-[13px] text-[#222]">レイヤ</div>
              <div className="w-[39px] h-[19px] bg-[#e4e4e4] border border-b-0 border-[#bbb] text-center leading-[18px] text-[13px] text-[#333]">表示</div>
            </div>
            <div className="flex flex-col pl-[14px] pt-[7px]">
              {LAYERS.map(([n, c]) => (
                <div key={n} className="h-[18px] shrink-0 flex items-center">
                  <div className="w-[18px] h-[16px] shrink-0 bg-[#e3e3e3] border border-[#b5b5b5] flex items-center justify-center">
                    <div className="w-[12px] h-[12px] border border-[#333]" style={{ backgroundColor: c }} />
                  </div>
                  <div className="ml-[2px] w-[13px] h-[13px] shrink-0 bg-white border border-[#333] flex items-center justify-center">
                    <svg width="11" height="11" viewBox="0 0 11 11"><path d="M1.500 5.500l3 3 5-6.500" stroke="#444" fill="none" /></svg>
                  </div>
                  <span className="ml-[3px] text-[12px] tracking-[-0.6px] text-[#222]">{n}</span>
                </div>
              ))}
            </div>
          </div>
        </div>
      </div>
      {/* message panel */}
      <div className="h-[31px] shrink-0 border-y border-[#a0a0a0] flex pl-[12px] pt-[1px] text-[11.500px] leading-[14px]">
        {[
          ['パッド', '204', 'w-[47px] text-[#005a00]'], ['ビア数', '342', 'w-[48px] text-[#005a00]'], ['配線セグメント数', '748', 'w-[106px] text-[#005a00]'],
          ['ノード数', '146', 'w-[66px] text-[#00667a]'], ['ネット数', '25', 'w-[67px] text-[#a01010]'], ['未配線', '24', 'w-[60px] text-[#00008a]'],
        ].map(r => <div key={r[0]} className={`${r[2]} shrink-0 flex flex-col`}><span className="tracking-[-1.9px]">{r[0]}</span><span className="tracking-[-0.8px]">{r[1]}</span></div>)}
      </div>
      {/* status */}
      <div className="h-[24px] shrink-0 flex items-center pl-[471px] pt-[3px] text-[12px] tracking-[-0.6px] text-[#222] whitespace-pre">
        <div className="w-[65px] h-full pl-[4px] flex items-center border-l border-[#d0d0d0]">Z 5.46</div>
        <div className="w-[172px] h-full pl-[4px] flex items-center border-l border-[#d0d0d0]">X 176.163622  Y 104.896661</div>
        <div className="w-[263px] h-full pl-[4px] flex items-center border-l border-[#d0d0d0]">dx 176.163622  dy 104.896661  dist 205.029</div>
        <div className="w-[43px] h-full pl-[4px] flex items-center border-x border-[#d0d0d0]">mm</div>
      </div>
    </div>
  );
}
